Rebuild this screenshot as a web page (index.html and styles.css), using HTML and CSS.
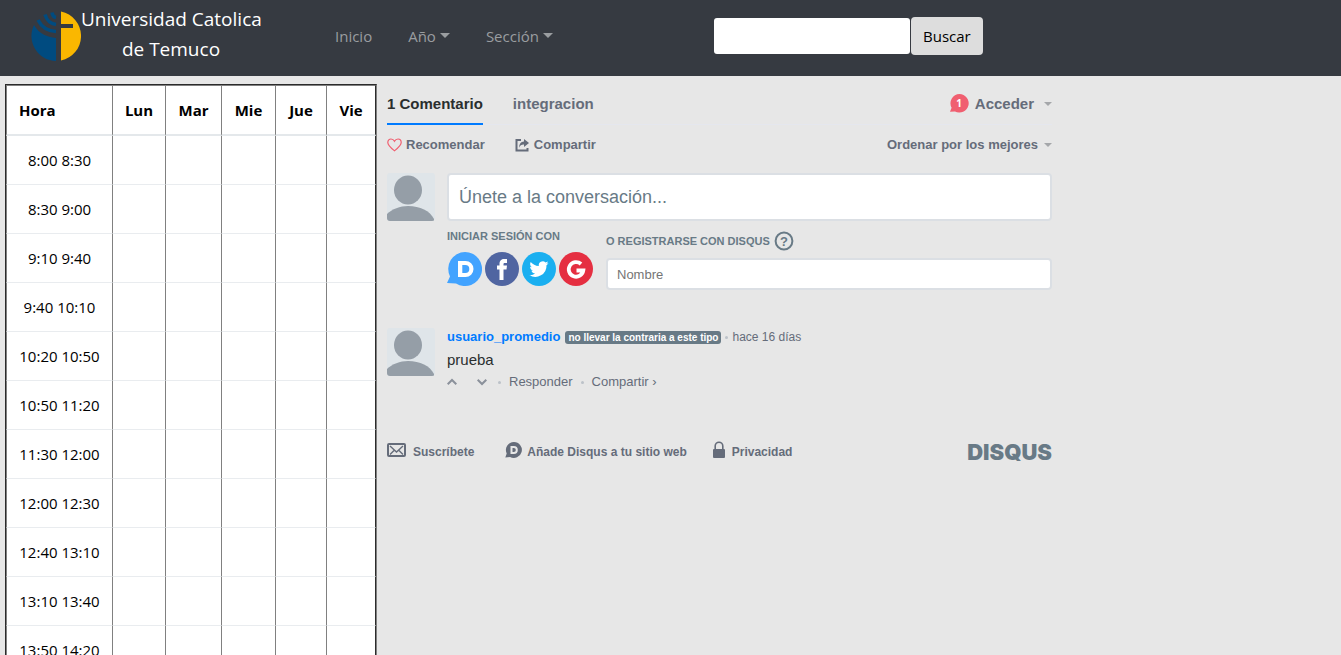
FILE: index.html
```
<!DOCTYPE html>
<html lang="es">
<head>
<meta charset="utf-8">
<title>Universidad Catolica de Temuco</title>
<link rel="stylesheet" href="styles.css">
</head>
<body>
<header class="navbar">
  <a class="brand" href="#">
    <svg class="brand-logo" viewBox="0 0 50 50" aria-hidden="true">
      <path fill="#004b80" d="M25 50A25 25 0 0 1 3 14C8 23 16 26 25 27Z"/>
      <g fill="none" stroke="#004b80" stroke-width="3.5">
        <path d="M7 9C11 17 17 20 25 20.500"/>
        <path d="M14 3.500C16 10 19 12.500 25 13.500"/>
        <path d="M21 1.500C21.500 5 22.500 6 25 6.500"/>
      </g>
      <path fill="#fab700" d="M30 .5A25 25 0 0 1 30 49.500V17H42V13H30Z"/>
    </svg>
    <span class="brand-name">Universidad Catolica<br>de Temuco</span>
  </a>
  <nav class="menu">
    <a href="#">Inicio</a>
    <a href="#" class="has-caret">Año</a>
    <a href="#" class="has-caret">Sección</a>
  </nav>
  <form class="search">
    <input type="text" aria-label="Buscar">
    <button type="button">Buscar</button>
  </form>
</header>
<main class="page">
  <table class="schedule">
    <colgroup><col class="c-hour"><col class="c-lun"><col class="c-mar"><col class="c-mie"><col class="c-jue"><col class="c-vie"></colgroup>
    <thead><tr><th class="hour">Hora</th><th>Lun</th><th>Mar</th><th>Mie</th><th>Jue</th><th>Vie</th></tr></thead>
    <tbody>
      <tr><td>8:00 8:30</td><td></td><td></td><td></td><td></td><td></td></tr>
      <tr><td>8:30 9:00</td><td></td><td></td><td></td><td></td><td></td></tr>
      <tr><td>9:10 9:40</td><td></td><td></td><td></td><td></td><td></td></tr>
      <tr><td>9:40 10:10</td><td></td><td></td><td></td><td></td><td></td></tr>
      <tr><td>10:20 10:50</td><td></td><td></td><td></td><td></td><td></td></tr>
      <tr><td>10:50 11:20</td><td></td><td></td><td></td><td></td><td></td></tr>
      <tr><td>11:30 12:00</td><td></td><td></td><td></td><td></td><td></td></tr>
      <tr><td>12:00 12:30</td><td></td><td></td><td></td><td></td><td></td></tr>
      <tr><td>12:40 13:10</td><td></td><td></td><td></td><td></td><td></td></tr>
      <tr><td>13:10 13:40</td><td></td><td></td><td></td><td></td><td></td></tr>
      <tr><td>13:50 14:20</td><td></td><td></td><td></td><td></td><td></td></tr>
    </tbody>
  </table>
  <section class="thread">
    <div class="tabs">
      <a href="#" class="tab active">1 Comentario</a>
      <a href="#" class="tab">integracion</a>
      <button type="button" class="login push">
        <svg width="20" height="20" viewBox="0 0 20 20" aria-hidden="true"><path fill="#f05f70" d="M10.500 0a9.300 9.300 0 1 1-4.500 17.500L1 17.800l1.600-4A9.300 9.300 0 0 1 10.500 0z"/><text x="10" y="13" class="count">1</text></svg>
        Acceder<span class="arrow"></span>
      </button>
    </div>
    <div class="tools">
      <button type="button"><svg width="15" height="14" viewBox="0 0 15 14" aria-hidden="true"><path fill="none" stroke="#f05f70" stroke-width="1.200" d="M7.500 12.800C4 10 .8 7.500.8 4.500.8 2.200 2.300 1 4 1c1.500 0 2.800.9 3.500 2.200C8.200 1.900 9.500 1 11 1c1.700 0 3.200 1.200 3.200 3.500 0 3-3.200 5.500-6.700 8.300z"/></svg>Recomendar</button>
      <button type="button"><svg width="15" height="14" viewBox="0 0 15 14" aria-hidden="true"><path fill="none" stroke="#656c7a" stroke-width="2" d="M6 2H1.500v10.500h11V10"/><path fill="#656c7a" d="M9 1l5 4-5 4V6.500C6.500 6.400 5 7.500 4.200 9.800 4 6 6 3.600 9 3.500z"/></svg>Compartir</button>
      <button type="button" class="sort push">Ordenar por los mejores<span class="arrow"></span></button>
    </div>
    <div class="entry">
      <svg class="avatar" viewBox="0 0 48 48" aria-hidden="true"><path fill="#dfe5e9" d="M0 0h48v48H0z"/><ellipse cx="21" cy="17" rx="14" ry="14.500" fill="#959ea7"/><path fill="#959ea7" d="M0 48v-7c5-5 13-8 21-8 12 0 22 5 26 13v2z"/></svg>
      <div class="entry-body">
        <input class="message" type="text" aria-label="Comentario" placeholder="Únete a la conversación...">
        <div class="auth">
          <div class="services">
            <h6>Iniciar sesión con</h6>
            <div class="service-list">
              <a href="#" aria-label="Disqus"><svg viewBox="0 0 35 34"><path fill="#42a3ff" d="M18 0a17 17 0 1 1-9 31.400L0 31l3-6.500A17 17 0 0 1 18 0z"/><path fill="#fff" fill-rule="evenodd" d="M11 9h7.500a8 8 0 0 1 0 16H11zM15.300 13v8h3a4 4 0 0 0 0-8z"/></svg></a>
              <a href="#" aria-label="Facebook"><svg viewBox="0 0 35 34"><circle cx="18" cy="17" r="17" fill="#5065a1"/><path fill="#fff" d="M15.500 28V17.500H13V13.500h2.500V12c0-3.500 2-5 4.500-5h3v4h-2c-1.200 0-1.500.5-1.500 1.300v1.200H23l-.5 4h-3V28z"/></svg></a>
              <a href="#" aria-label="Twitter"><svg viewBox="0 0 35 34"><circle cx="18" cy="17" r="17" fill="#1aaff0"/><path fill="#fff" d="M27.500 11.100c-.7.300-1.400.5-2.200.6.800-.5 1.400-1.200 1.700-2.100-.7.400-1.600.8-2.500.9a4 4 0 0 0-6.700 3.600c-3.300-.2-6.200-1.700-8.100-4.100-1.100 1.900-.5 4.100 1.200 5.300-.6 0-1.300-.2-1.800-.5 0 1.900 1.300 3.500 3.100 3.900-.6.200-1.200.2-1.800.1.500 1.600 2 2.700 3.700 2.700a8 8 0 0 1-5.800 1.600 11.200 11.200 0 0 0 17.200-9.900c.8-.6 1.500-1.300 2-2.100z"/></svg></a>
              <a href="#" aria-label="Google"><svg viewBox="0 0 35 34"><circle cx="18" cy="17" r="17" fill="#e52f41"/><path fill="none" stroke="#fff" stroke-width="3.800" d="M23 12a7.300 7.300 0 1 0 2.300 6.500H18.500"/></svg></a>
            </div>
          </div>
          <div class="register">
            <h6><label for="name">O registrarse con Disqus</label><svg width="20" height="20" viewBox="0 0 20 20" aria-hidden="true"><circle cx="10" cy="10" r="8.400" fill="none" stroke="#687a86" stroke-width="2"/><text x="10" y="15" class="question">?</text></svg></h6>
            <input id="name" type="text" placeholder="Nombre">
          </div>
        </div>
      </div>
    </div>
    <article class="entry post">
      <svg class="avatar" viewBox="0 0 48 48" aria-hidden="true"><path fill="#dfe5e9" d="M0 0h48v48H0z"/><ellipse cx="21" cy="17" rx="14" ry="14.500" fill="#959ea7"/><path fill="#959ea7" d="M0 48v-7c5-5 13-8 21-8 12 0 22 5 26 13v2z"/></svg>
      <div class="entry-body">
        <div class="byline"><a href="#">usuario_promedio</a><span class="badge">no llevar la contraria a este tipo</span><i class="dot"></i><span>hace 16 días</span></div>
        <p>prueba</p>
        <div class="actions">
          <button type="button" aria-label="Votar a favor"><svg width="10" height="8" viewBox="0 0 10 8"><path d="M.7 6.300L5 2l4.300 4.300" fill="none" stroke="#8b919b" stroke-width="2"/></svg></button>
          <button type="button" class="down" aria-label="Votar en contra"><svg width="10" height="8" viewBox="0 0 10 8"><path d="M.7 1.700L5 6l4.300-4.300" fill="none" stroke="#8b919b" stroke-width="2"/></svg></button>
          <i class="dot"></i><a href="#">Responder</a><i class="dot"></i><a href="#">Compartir ›</a>
        </div>
      </div>
    </article>
    <footer class="foot">
      <a href="#"><svg width="20" height="16" viewBox="0 0 20 16" aria-hidden="true"><g fill="none" stroke="#656c7a"><rect x="1" y="2" width="17" height="12" rx="1" stroke-width="2"/><path stroke-width="1.400" d="M3 4l6.500 6L16 4M3 12.500L7.500 8M16 12.500L11.500 8"/></g></svg>Suscríbete</a>
      <a href="#"><svg width="17" height="18" viewBox="0 0 17 18" aria-hidden="true"><path fill="#656c7a" d="M9 1a8 8 0 1 1-4 15L.3 16.500l1.400-4A8 8 0 0 1 9 1z"/><path fill="none" stroke="#e7e7e7" stroke-width="2" d="M6.500 6h2.300a3 3 0 0 1 0 6H6.500z"/></svg>Añade Disqus a tu sitio web</a>
      <a href="#"><svg width="14" height="18" viewBox="0 0 14 18" aria-hidden="true"><rect x="1" y="8" width="12" height="9" rx="1" fill="#656c7a"/><path fill="none" stroke="#656c7a" stroke-width="1.600" d="M3.200 9V5a3.800 3.800 0 0 1 7.600 0v4"/></svg>Privacidad</a>
      <a href="#" class="wordmark push">DISQUS</a>
    </footer>
  </section>
</main>
</body>
</html>
```
FILE: styles.css
```
* { box-sizing: border-box; }
html { scrollbar-width: none; }
body {
  display: flex;
  flex-direction: column;
  height: 100vh;
  margin: 0;
  overflow: hidden;
  background: #e7e7e7;
  font: 15px/24px "Open Sans", "Noto Sans", sans-serif;
  color: #000;
}
a { color: inherit; text-decoration: none; }
button { border: 0; padding: 0; background: none; color: inherit; font: inherit; cursor: pointer; }
svg { display: block; flex: none; }
h6, p { margin: 0; }
.push { margin-left: auto; }

.navbar {
  display: flex;
  flex: none;
  align-items: center;
  padding: 2px 31px 10px;
  background: #363a41;
  min-height: 76px;
}
.brand { display: flex; align-items: center; color: #fff; }
.brand-logo { width: 50px; height: 50px; margin-top: 4px; }
.brand-name { width: 180px; font-size: 19px; line-height: 30px; text-align: center; white-space: nowrap; }
.menu { display: flex; gap: 36px; margin: 4px 0 0 74px; color: #9a9da0; }
.has-caret::after {
  content: "";
  display: inline-block;
  margin-left: 4px;
  vertical-align: 4px;
  border: 5px solid transparent;
  border-top-color: currentColor;
  border-bottom: 0;
}
.search { display: flex; align-items: center; gap: 1px; margin: 4px 0 0 161px; }
.search input { width: 196px; height: 36px; padding: 6px 12px; border: 0; border-radius: 3px; background: #fff; font: inherit; }
.search button { height: 38px; padding: 0 12px; min-width: 72px; border-radius: 4px; background: #ddd; color: #000; }

.page { display: flex; flex: 1; align-items: flex-start; gap: 10px; min-height: 0; padding: 8px 5px 0; overflow: auto; scrollbar-width: none; }

.schedule {
  flex: none;
  table-layout: fixed;
  width: 372px;
  border: 1px solid #2b2b2b;
  border-right-color: #808080;
  border-spacing: 0;
  background: #fff;
  text-align: center;
}
.c-hour { width: 106px; }
.c-lun { width: 53px; }
.c-mar { width: 56px; }
.c-mie { width: 54px; }
.c-jue { width: 51px; }
.c-vie { width: 50px; }
.schedule th, .schedule td { padding: 0; border-left: 1px solid #808080; }
.schedule th:last-child, .schedule td:last-child { border-right: 1px solid #2b2b2b; }
.schedule th { height: 51px; border-top: 1px solid #808080; border-bottom: 2px solid #e4e8eb; }
.schedule .hour { padding-left: 12px; text-align: left; }
.schedule td { height: 49px; border-bottom: 1px solid #e9ecef; }

.thread { flex: 0 1 665px; min-width: 0; font-family: "Liberation Sans", Arial, sans-serif; font-size: 13px; line-height: 18px; color: #656c7a; }
.tabs { display: flex; height: 41px; gap: 30px; border-bottom: 1px solid #e5e7ee; font-size: 15px; font-weight: bold; line-height: 40px; }
.tab { height: 41px; }
.tab.active { border-bottom: 2px solid #007bff; color: #2a2e2e; }
.login { display: flex; align-items: center; gap: 6px; height: 40px; }
.count { fill: #fff; font: bold 10px "Open Sans", sans-serif; text-anchor: middle; }
.arrow { display: inline-block; margin-left: 4px; border: 4px solid transparent; border-top-color: #a5a7aa; border-bottom: 0; }
.tools { display: flex; align-items: center; height: 40px; gap: 30px; font-weight: bold; }
.tools button { display: flex; align-items: center; gap: 4px; }
.tools .arrow { margin-left: 2px; }

.entry { display: flex; gap: 12px; margin-top: 8px; }
.avatar { width: 48px; height: 48px; border-radius: 3px; }
.entry-body { flex: 1; min-width: 0; }
.thread input { display: block; width: 100%; border: 2px solid #dbdfe4; border-radius: 4px; background: #fff; font-family: inherit; }
.thread .message { height: 48px; padding: 0 10px; font-size: 18px; }
.message::placeholder { color: #687a86; opacity: 1; }
.auth { display: flex; gap: 13px; }
.auth h6 { display: flex; align-items: center; font-size: 11px; line-height: 20px; color: #687a86; text-transform: uppercase; }
.services { padding-top: 5px; }
.service-list { display: flex; gap: 2px; margin-top: 6px; }
.service-list svg { width: 35px; height: 34px; }
.register { flex: 1; padding-top: 10px; }
.register h6 { gap: 4px; }
.register input { height: 32px; margin-top: 7px; padding: 0 9px; font-size: 13px; }
.question { fill: #687a86; font: bold 13px "Liberation Sans", sans-serif; text-anchor: middle; }

.post { margin-top: 38px; }
.byline { display: flex; align-items: center; }
.byline a { color: #007bff; font-weight: bold; }
.byline > span:last-child { font-size: 12px; }
.badge { margin-left: 5px; padding: 0 3px; border-radius: 3px; background: #687a86; color: #fff; font: bold 10px/13px "Liberation Sans", sans-serif; }
.dot { width: 3px; height: 3px; margin: 0 4px; border-radius: 2px; background: #bcc2c9; }
.post p { margin-top: 4px; font-size: 15px; line-height: 20px; color: #2a2e2e; }
.actions { display: flex; align-items: center; margin-top: 3px; }
.down { margin-left: 20px; }
.actions .dot { margin: 0 8px; }
.actions .down + .dot { margin-left: 11px; }

.foot { display: flex; align-items: center; gap: 31px; margin-top: 48px; font-size: 12px; font-weight: bold; }
.foot a { display: flex; align-items: center; gap: 6px; }
.foot a:nth-child(2) { gap: 5px; }
.foot a:nth-child(3) { margin-left: -6px; }
.foot svg { margin-bottom: 4px; }
.foot .wordmark { font: 900 22px/26px Inter, sans-serif; color: #687a86; }
```
